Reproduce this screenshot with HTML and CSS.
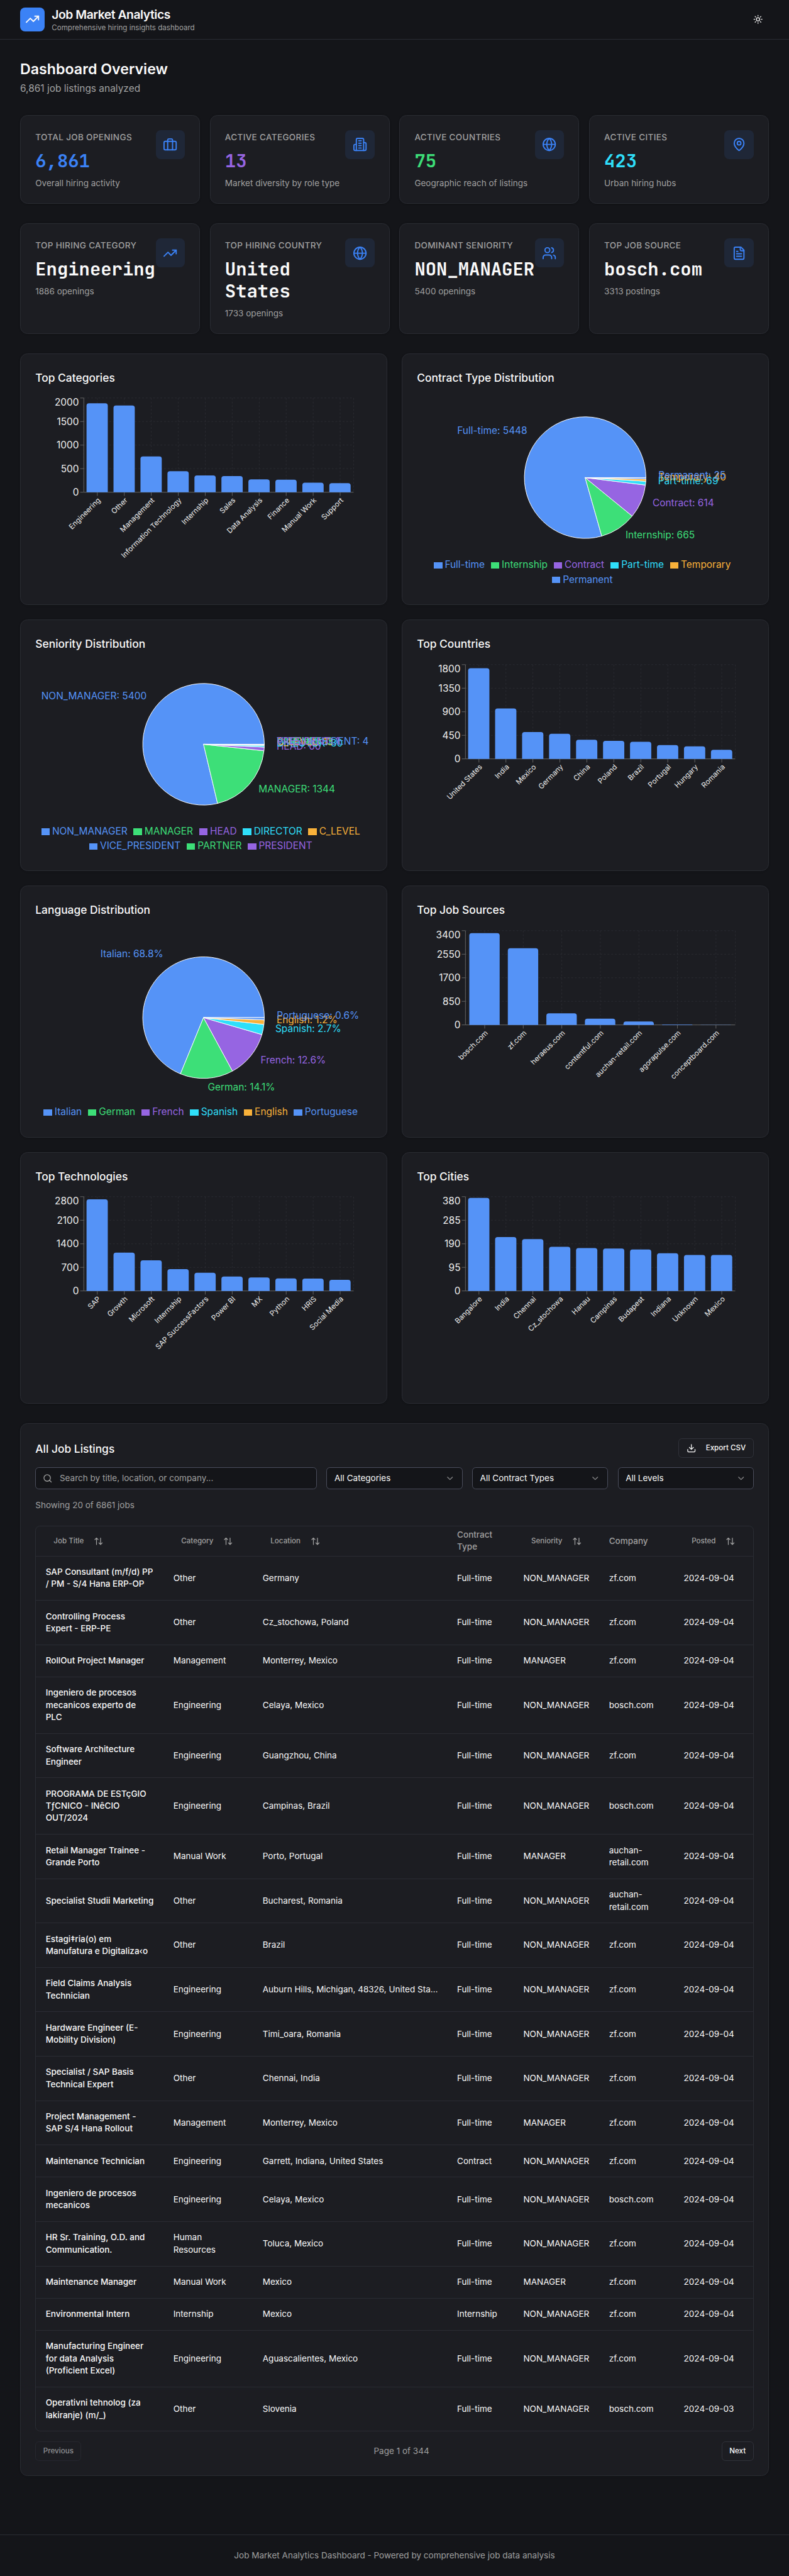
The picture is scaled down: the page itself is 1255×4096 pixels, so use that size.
FILE: index.html
```
<!DOCTYPE html>
<html lang="en">
<head>
<meta charset="utf-8">
<title>Job Market Analytics</title>
<link rel="stylesheet" href="styles.css">
</head>
<body>
<svg class="sprite" aria-hidden="true">
  <symbol id="i-trend" viewBox="0 0 24 24"><path d="M22 7 13.5 15.5 8.5 10.5 2 17"/><path d="M16 7h6v6"/></symbol>
  <symbol id="i-sun" viewBox="0 0 24 24"><circle cx="12" cy="12" r="4"/><path d="M12 2v2M12 20v2M4.93 4.93l1.41 1.41M17.66 17.66l1.41 1.41M2 12h2M20 12h2M6.34 17.66l-1.41 1.41M19.07 4.93l-1.41 1.41"/></symbol>
  <symbol id="i-briefcase" viewBox="0 0 24 24"><rect width="20" height="14" x="2" y="7" rx="2"/><path d="M16 21V5a2 2 0 0 0-2-2h-4a2 2 0 0 0-2 2v16"/></symbol>
  <symbol id="i-building" viewBox="0 0 24 24"><path d="M6 22V4a2 2 0 0 1 2-2h8a2 2 0 0 1 2 2v18Z"/><path d="M6 12H4a2 2 0 0 0-2 2v6a2 2 0 0 0 2 2h2M18 9h2a2 2 0 0 1 2 2v9a2 2 0 0 1-2 2h-2M10 6h4M10 10h4M10 14h4M10 18h4"/></symbol>
  <symbol id="i-globe" viewBox="0 0 24 24"><circle cx="12" cy="12" r="10"/><path d="M12 2a14.5 14.5 0 0 0 0 20 14.5 14.5 0 0 0 0-20M2 12h20"/></symbol>
  <symbol id="i-pin" viewBox="0 0 24 24"><path d="M20 10c0 4.993-5.539 10.193-7.399 11.799a1 1 0 0 1-1.202 0C9.539 20.193 4 14.993 4 10a8 8 0 0 1 16 0"/><circle cx="12" cy="10" r="3"/></symbol>
  <symbol id="i-users" viewBox="0 0 24 24"><path d="M16 21v-2a4 4 0 0 0-4-4H6a4 4 0 0 0-4 4v2"/><circle cx="9" cy="7" r="4"/><path d="M22 21v-2a4 4 0 0 0-3-3.87M16 3.13a4 4 0 0 1 0 7.75"/></symbol>
  <symbol id="i-file" viewBox="0 0 24 24"><path d="M15 2H6a2 2 0 0 0-2 2v16a2 2 0 0 0 2 2h12a2 2 0 0 0 2-2V7Z"/><path d="M14 2v4a2 2 0 0 0 2 2h4M10 9H8M16 13H8M16 17H8"/></symbol>
  <symbol id="i-download" viewBox="0 0 24 24"><path d="M21 15v4a2 2 0 0 1-2 2H5a2 2 0 0 1-2-2v-4M7 10l5 5 5-5M12 15V3"/></symbol>
  <symbol id="i-search" viewBox="0 0 24 24"><circle cx="11" cy="11" r="8"/><path d="m21 21-4.3-4.3"/></symbol>
  <symbol id="i-chevron" viewBox="0 0 24 24"><path d="m6 9 6 6 6-6"/></symbol>
  <symbol id="i-sort" viewBox="0 0 24 24"><path d="m21 16-4 4-4-4M17 20V4M3 8l4-4 4 4M7 4v16"/></symbol>
</svg>

<header class="topbar">
  <div class="topbar-inner">
    <div class="brand">
      <div class="logo"><svg class="icon lg"><use href="#i-trend"/></svg></div>
      <div>
        <h1>Job Market Analytics</h1>
        <p>Comprehensive hiring insights dashboard</p>
      </div>
    </div>
    <button class="theme" aria-label="Toggle theme"><svg class="icon"><use href="#i-sun"/></svg></button>
  </div>
</header>

<main>
  <section class="intro">
    <h2>Dashboard Overview</h2>
    <p>6,861 job listings analyzed</p>
  </section>

  <section class="stats">
    <article class="card stat"><div class="stat-body"><p class="label">TOTAL JOB OPENINGS</p><p class="value blue">6,861</p><p class="sub">Overall hiring activity</p></div><div class="badge"><svg class="icon lg"><use href="#i-briefcase"/></svg></div></article>
    <article class="card stat"><div class="stat-body"><p class="label">ACTIVE CATEGORIES</p><p class="value purple">13</p><p class="sub">Market diversity by role type</p></div><div class="badge"><svg class="icon lg"><use href="#i-building"/></svg></div></article>
    <article class="card stat"><div class="stat-body"><p class="label">ACTIVE COUNTRIES</p><p class="value green">75</p><p class="sub">Geographic reach of listings</p></div><div class="badge"><svg class="icon lg"><use href="#i-globe"/></svg></div></article>
    <article class="card stat"><div class="stat-body"><p class="label">ACTIVE CITIES</p><p class="value cyan">423</p><p class="sub">Urban hiring hubs</p></div><div class="badge"><svg class="icon lg"><use href="#i-pin"/></svg></div></article>
  </section>

  <section class="stats">
    <article class="card stat"><div class="stat-body"><p class="label">TOP HIRING CATEGORY</p><p class="value">Engineering</p><p class="sub">1886 openings</p></div><div class="badge"><svg class="icon lg"><use href="#i-trend"/></svg></div></article>
    <article class="card stat"><div class="stat-body"><p class="label">TOP HIRING COUNTRY</p><p class="value">United States</p><p class="sub">1733 openings</p></div><div class="badge"><svg class="icon lg"><use href="#i-globe"/></svg></div></article>
    <article class="card stat"><div class="stat-body"><p class="label">DOMINANT SENIORITY</p><p class="value">NON_MANAGER</p><p class="sub">5400 openings</p></div><div class="badge"><svg class="icon lg"><use href="#i-users"/></svg></div></article>
    <article class="card stat"><div class="stat-body"><p class="label">TOP JOB SOURCE</p><p class="value">bosch.com</p><p class="sub">3313 postings</p></div><div class="badge"><svg class="icon lg"><use href="#i-file"/></svg></div></article>
  </section>

  <section class="charts">
    <article class="card"><h3>Top Categories</h3><div class="chart" data-bar="categories"></div></article>
    <article class="card"><h3>Contract Type Distribution</h3><div class="chart" data-pie="contract"></div></article>
    <article class="card"><h3>Seniority Distribution</h3><div class="chart" data-pie="seniority"></div></article>
    <article class="card"><h3>Top Countries</h3><div class="chart" data-bar="countries"></div></article>
    <article class="card"><h3>Language Distribution</h3><div class="chart" data-pie="language"></div></article>
    <article class="card"><h3>Top Job Sources</h3><div class="chart" data-bar="sources"></div></article>
    <article class="card"><h3>Top Technologies</h3><div class="chart" data-bar="technologies"></div></article>
    <article class="card"><h3>Top Cities</h3><div class="chart" data-bar="cities"></div></article>
  </section>

  <section class="card listings">
    <div class="listings-head">
      <h3>All Job Listings</h3>
      <button class="btn export"><svg class="icon"><use href="#i-download"/></svg>Export CSV</button>
    </div>
    <div class="filters">
      <div class="field search"><svg class="icon"><use href="#i-search"/></svg><span>Search by title, location, or company...</span></div>
      <div class="field select"><span>All Categories</span><svg class="icon"><use href="#i-chevron"/></svg></div>
      <div class="field select"><span>All Contract Types</span><svg class="icon"><use href="#i-chevron"/></svg></div>
      <div class="field select"><span>All Levels</span><svg class="icon"><use href="#i-chevron"/></svg></div>
    </div>
    <p class="count">Showing 20 of 6861 jobs</p>
    <div class="table-wrap">
      <table>
        <colgroup><col class="c-title"><col class="c-cat"><col class="c-loc"><col class="c-type"><col class="c-sen"><col class="c-comp"><col class="c-date"></colgroup>
        <thead><tr>
          <th><span class="sort">Job Title<svg class="icon"><use href="#i-sort"/></svg></span></th>
          <th><span class="sort">Category<svg class="icon"><use href="#i-sort"/></svg></span></th>
          <th><span class="sort">Location<svg class="icon"><use href="#i-sort"/></svg></span></th>
          <th>Contract Type</th>
          <th><span class="sort">Seniority<svg class="icon"><use href="#i-sort"/></svg></span></th>
          <th>Company</th>
          <th><span class="sort">Posted<svg class="icon"><use href="#i-sort"/></svg></span></th>
        </tr></thead>
        <tbody>
          <tr><td>SAP Consultant (m/f/d) PP<br>/ PM - S/4 Hana ERP-OP</td><td>Other</td><td>Germany</td><td>Full-time</td><td>NON_MANAGER</td><td>zf.com</td><td>2024-09-04</td></tr>
          <tr><td>Controlling Process<br>Expert - ERP-PE</td><td>Other</td><td>Cz_stochowa, Poland</td><td>Full-time</td><td>NON_MANAGER</td><td>zf.com</td><td>2024-09-04</td></tr>
          <tr><td>RollOut Project Manager</td><td>Management</td><td>Monterrey, Mexico</td><td>Full-time</td><td>MANAGER</td><td>zf.com</td><td>2024-09-04</td></tr>
          <tr><td>Ingeniero de procesos<br>mecanicos experto de<br>PLC</td><td>Engineering</td><td>Celaya, Mexico</td><td>Full-time</td><td>NON_MANAGER</td><td>bosch.com</td><td>2024-09-04</td></tr>
          <tr><td>Software Architecture<br>Engineer</td><td>Engineering</td><td>Guangzhou, China</td><td>Full-time</td><td>NON_MANAGER</td><td>zf.com</td><td>2024-09-04</td></tr>
          <tr><td>PROGRAMA DE ESTçGIO<br>TƒCNICO - INêCIO<br>OUT/2024</td><td>Engineering</td><td>Campinas, Brazil</td><td>Full-time</td><td>NON_MANAGER</td><td>bosch.com</td><td>2024-09-04</td></tr>
          <tr><td>Retail Manager Trainee -<br>Grande Porto</td><td>Manual Work</td><td>Porto, Portugal</td><td>Full-time</td><td>MANAGER</td><td>auchan-<br>retail.com</td><td>2024-09-04</td></tr>
          <tr><td>Specialist Studii Marketing</td><td>Other</td><td>Bucharest, Romania</td><td>Full-time</td><td>NON_MANAGER</td><td>auchan-<br>retail.com</td><td>2024-09-04</td></tr>
          <tr><td>Estagi‡ria(o) em<br>Manufatura e Digitaliza‹o</td><td>Other</td><td>Brazil</td><td>Full-time</td><td>NON_MANAGER</td><td>zf.com</td><td>2024-09-04</td></tr>
          <tr><td>Field Claims Analysis<br>Technician</td><td>Engineering</td><td>Auburn Hills, Michigan, 48326, United States</td><td>Full-time</td><td>NON_MANAGER</td><td>zf.com</td><td>2024-09-04</td></tr>
          <tr><td>Hardware Engineer (E-<br>Mobility Division)</td><td>Engineering</td><td>Timi_oara, Romania</td><td>Full-time</td><td>NON_MANAGER</td><td>zf.com</td><td>2024-09-04</td></tr>
          <tr><td>Specialist / SAP Basis<br>Technical Expert</td><td>Other</td><td>Chennai, India</td><td>Full-time</td><td>NON_MANAGER</td><td>zf.com</td><td>2024-09-04</td></tr>
          <tr><td>Project Management -<br>SAP S/4 Hana Rollout</td><td>Management</td><td>Monterrey, Mexico</td><td>Full-time</td><td>MANAGER</td><td>zf.com</td><td>2024-09-04</td></tr>
          <tr><td>Maintenance Technician</td><td>Engineering</td><td>Garrett, Indiana, United States</td><td>Contract</td><td>NON_MANAGER</td><td>zf.com</td><td>2024-09-04</td></tr>
          <tr><td>Ingeniero de procesos<br>mecanicos</td><td>Engineering</td><td>Celaya, Mexico</td><td>Full-time</td><td>NON_MANAGER</td><td>bosch.com</td><td>2024-09-04</td></tr>
          <tr><td>HR Sr. Training, O.D. and<br>Communication.</td><td>Human<br>Resources</td><td>Toluca, Mexico</td><td>Full-time</td><td>NON_MANAGER</td><td>zf.com</td><td>2024-09-04</td></tr>
          <tr><td>Maintenance Manager</td><td>Manual Work</td><td>Mexico</td><td>Full-time</td><td>MANAGER</td><td>zf.com</td><td>2024-09-04</td></tr>
          <tr><td>Environmental Intern</td><td>Internship</td><td>Mexico</td><td>Internship</td><td>NON_MANAGER</td><td>zf.com</td><td>2024-09-04</td></tr>
          <tr><td>Manufacturing Engineer<br>for data Analysis<br>(Proficient Excel)</td><td>Engineering</td><td>Aguascalientes, Mexico</td><td>Full-time</td><td>NON_MANAGER</td><td>zf.com</td><td>2024-09-04</td></tr>
          <tr><td>Operativni tehnolog (za<br>lakiranje) (m/_)</td><td>Other</td><td>Slovenia</td><td>Full-time</td><td>NON_MANAGER</td><td>bosch.com</td><td>2024-09-03</td></tr>
        </tbody>
      </table>
    </div>
    <div class="pager">
      <button class="btn off">Previous</button>
      <span>Page 1 of 344</span>
      <button class="btn">Next</button>
    </div>
  </section>
</main>

<footer>Job Market Analytics Dashboard - Powered by comprehensive job data analysis</footer>
<script src="charts.js"></script>
</body>
</html>
```
FILE: styles.css
```
:root {
  --bg: #141519;
  --card: #1c1d22;
  --line: #2a2c33;
  --input: #4a4d5c;
  --text: #fafafa;
  --muted: #a0a0a0;
  --primary: #3b82f6;
  --c1: #5593f7;
  --c2: #3ddf78;
  --c3: #9665e2;
  --c4: #2fdffa;
  --c5: #f8b13a;
}
* { box-sizing: border-box; margin: 0; padding: 0; }
html { zoom: 0.9666; background: var(--bg); }
body {
  background: var(--bg);
  color: var(--text);
  font: 14px/20px Inter, "Noto Sans", sans-serif;
}
button { font: inherit; color: inherit; background: none; border: 0; }
.sprite { display: none; }
.icon {
  width: 16px; height: 16px; flex: none; display: block;
  fill: none; stroke: currentColor; stroke-width: 2;
  stroke-linecap: round; stroke-linejoin: round;
}
.icon.lg { width: 24px; height: 24px; }

.topbar { border-bottom: 1px solid var(--line); }
.topbar-inner {
  max-width: 1280px; height: 64px; margin: 0 auto; padding: 0 24px;
  display: flex; align-items: center; justify-content: space-between;
}
.brand { display: flex; align-items: center; gap: 12px; }
.logo {
  width: 40px; height: 40px; border-radius: 8px; background: var(--primary);
  display: flex; align-items: center; justify-content: center;
}
h1 { font-size: 20px; line-height: 28px; font-weight: 600; letter-spacing: -0.025em; }
.brand p { font-size: 12px; line-height: 16px; color: var(--muted); }
.theme { width: 36px; height: 36px; display: flex; align-items: center; justify-content: center; }

main { max-width: 1280px; margin: 0 auto; padding: 32px 24px; display: flex; flex-direction: column; gap: 32px; }
.intro { display: flex; flex-direction: column; gap: 4px; }
h2 { font-size: 24px; line-height: 32px; font-weight: 600; padding-top: 1px; margin-bottom: -1px; }
.intro p { font-size: 16px; line-height: 24px; color: var(--muted); }

.card {
  background: var(--card); border: 1px solid var(--line); border-radius: 12px;
  padding: 24px; box-shadow: 0 1px 3px rgba(0, 0, 0, .2);
}
.stats { display: grid; grid-template-columns: repeat(4, minmax(0, 1fr)); gap: 16px; }
.stat { display: flex; align-items: flex-start; justify-content: space-between; padding-bottom: 22px; }
.stat-body { flex: 1; min-width: 0; padding-top: 2px; }
.label { font-weight: 500; letter-spacing: .025em; color: var(--muted); white-space: nowrap; }
.value { margin-top: 11px; font: 700 29.9px/36px "JetBrains Mono", "DejaVu Sans Mono", monospace; }
.sub { margin-top: 9px; color: var(--muted); }
.blue { color: var(--primary); }
.purple { color: var(--c3); }
.green { color: var(--c2); }
.cyan { color: var(--c4); }
.badge { padding: 12px; border-radius: 8px; color: var(--primary); background: rgba(59, 130, 246, .1); }

.charts { display: grid; grid-template-columns: repeat(2, minmax(0, 1fr)); gap: 24px; }
h3 { font-size: 18px; line-height: 28px; font-weight: 500; padding-top: 1px; margin-bottom: -1px; }
.chart { margin-top: 16px; height: 320px; display: flex; flex-direction: column; }
.chart svg.plot { width: 554px; display: block; overflow: visible; font-size: 16px; }
.grid { stroke: #2b2c32; stroke-dasharray: 3 3; fill: none; }
.axis { stroke: #666; fill: none; }
.tick { fill: #ededed; }
.xtick { fill: #ededed; font-size: 12px; }
.bar { fill: var(--c1); }
.slice { stroke: #fff; stroke-width: 1; stroke-linejoin: round; }
.legend { list-style: none; padding: 0 5px; text-align: center; font-size: 16px; line-height: 24px; }
.legend li { display: inline-block; margin-right: 10px; }
.legend .key { display: inline-block; width: 14px; height: 10.5px; margin-right: 4px; vertical-align: middle; }

.listings-head { display: flex; align-items: center; justify-content: space-between; }
.btn {
  height: 32px; padding: 0 12px; border: 1px solid #30323a; border-radius: 6px;
  font-size: 12px; font-weight: 500; display: flex; align-items: center;
}
.btn.off { opacity: .5; }
.export { gap: 16px; }
.filters { margin-top: 16px; display: grid; grid-template-columns: repeat(5, minmax(0, 1fr)); gap: 16px; }
.field {
  height: 36px; padding: 0 12px; border: 1px solid var(--input); border-radius: 6px;
  background: var(--bg); display: flex; align-items: center;
}
.search { grid-column: span 2; gap: 12px; padding-left: 11px; color: var(--muted); }
.select { justify-content: space-between; }
.select .icon { opacity: .5; }
.count { margin-top: 16px; color: var(--muted); }

.table-wrap { margin-top: 24px; border: 1px solid var(--line); border-radius: 8px; }
table { width: 100%; table-layout: fixed; border-collapse: separate; border-spacing: 0; }
.c-title { width: 210px; } .c-cat { width: 147px; } .c-loc { width: 320px; }
.c-type { width: 109px; } .c-sen { width: 141px; } .c-comp { width: 123px; }
th { height: 49px; padding: 0 16px; text-align: left; font-weight: 500; color: var(--muted); border-bottom: 1px solid var(--line); }
.sort { display: flex; align-items: center; gap: 16px; padding-left: 13px; font-size: 12px; white-space: nowrap; }
td { padding: 16px; border-bottom: 1px solid var(--line); vertical-align: middle; white-space: nowrap; }
tr:last-child td { border-bottom: 0; }
td:first-child { font-weight: 500; }
td:nth-child(3) { padding-right: 13.5px; overflow: hidden; text-overflow: ellipsis; }
.pager { margin-top: 16px; display: flex; align-items: center; justify-content: space-between; color: var(--muted); }
.pager .btn { color: var(--text); }

footer {
  margin-top: 64px; padding: 24px; border-top: 1px solid var(--line);
  text-align: center; color: var(--muted);
}
```
FILE: charts.js
```
const bars = {
  categories: { max: 2000, rows: [['Engineering', 1886], ['Other', 1841], ['Management', 761], ['Information Technology', 447], ['Internship', 357], ['Sales', 344], ['Data Analysis', 271], ['Finance', 266], ['Manual Work', 203], ['Support', 193]] },
  countries: { max: 1800, rows: [['United States', 1733], ['India', 964], ['Mexico', 511], ['Germany', 480], ['China', 364], ['Poland', 345], ['Brazil', 325], ['Portugal', 264], ['Hungary', 240], ['Romania', 174]] },
  sources: { max: 3400, rows: [['bosch.com', 3313], ['zf.com', 2766], ['heraeus.com', 418], ['contentful.com', 222], ['auchan-retail.com', 125], ['agorapulse.com', 14], ['conceptboard.com', 3]] },
  technologies: { max: 2800, rows: [['SAP', 2722], ['Growth', 1140], ['Microsoft', 910], ['Internship', 650], ['SAP SuccessFactors', 540], ['Power BI', 430], ['MX', 400], ['Python', 370], ['HRIS', 367], ['Social Media', 330]] },
  cities: { max: 380, rows: [['Bangalore', 375], ['India', 217], ['Chennai', 209], ['Cz_stochowa', 178], ['Hanau', 173], ['Campinas', 171], ['Budapest', 167], ['Indiana', 152], ['Unknown', 145], ['Mexico', 145]] },
};
const pies = {
  contract: { lines: 2, rows: [['Full-time', 5448], ['Internship', 665], ['Contract', 614], ['Part-time', 69], ['Temporary', 40], ['Permanent', 25]] },
  seniority: { lines: 2, rows: [['NON_MANAGER', 5400], ['MANAGER', 1344], ['HEAD', 66], ['DIRECTOR', 30], ['C_LEVEL', 13], ['VICE_PRESIDENT', 4], ['PARTNER', 3], ['PRESIDENT', 1]] },
  language: { lines: 1, unit: '%', rows: [['Italian', 68.8], ['German', 14.1], ['French', 12.6], ['Spanish', 2.7], ['English', 1.2], ['Portuguese', 0.6]] },
};

// Plot area inside the 554x320 chart box
const L = 80, T = 5, W = 444, H = 155, B = T + H;

function barChart({ max, rows }) {
  const band = W / rows.length, w = Math.floor(band * 0.8);
  let grid = '', axis = '', text = '', shapes = '';
  for (let i = 0; i <= 4; i++) {
    const y = B - H * i / 4;
    grid += `<path class="grid" d="M${L} ${y}h${W}"/>`;
    axis += `<path class="axis" d="M${L - 6} ${y}h6"/>`;
    text += `<text class="tick" x="${L - 8}" y="${(i === 4 ? y + 7 : y) + 5.7}" text-anchor="end">${max * i / 4}</text>`;
  }
  grid += `<path class="grid" d="M${L} ${T}v${H}M${L + W} ${T}v${H}"/>`;
  rows.forEach(([name, value], i) => {
    const x = L + band * i + band * 0.1, cx = L + band * (i + 0.5);
    const h = H * value / max, r = Math.min(4, h);
    grid += `<path class="grid" d="M${cx} ${T}v${H}"/>`;
    axis += `<path class="axis" d="M${cx} ${B}v6"/>`;
    shapes += `<path class="bar" d="M${x} ${B}v${r - h}a${r} ${r} 0 0 1 ${r} ${-r}h${w - 2 * r}a${r} ${r} 0 0 1 ${r} ${r}v${h - r}z"/>`;
    text += `<text class="xtick" x="${cx}" y="${B + 8}" dy="0.71em" text-anchor="end" transform="rotate(-45 ${cx} ${B + 8})">${name}</text>`;
  });
  axis += `<path class="axis" d="M${L} ${T}V${B}h${W}"/>`;
  return `<svg class="plot" height="320">${grid}${axis}${shapes}${text}</svg>`;
}

function pieChart({ rows, lines, unit = '' }) {
  const h = 315 - 24 * lines, cx = 277, cy = (h + 5) / 2, R = 100;
  const total = rows.reduce((s, r) => s + r[1], 0);
  const at = (deg, r) => [cx + r * Math.cos(deg * Math.PI / 180), cy - r * Math.sin(deg * Math.PI / 180)];
  let a = 0, slices = '', labels = '', legend = '';
  rows.forEach(([name, value], i) => {
    const color = `var(--c${i % 5 + 1})`, sweep = value / total * 360;
    const [x1, y1] = at(a, R), [x2, y2] = at(a + sweep, R), [lx, ly] = at(a + sweep / 2, R + 20);
    slices += `<path class="slice" fill="${color}" d="M${cx} ${cy}L${x1} ${y1}A${R} ${R} 0 ${sweep > 180 ? 1 : 0} 0 ${x2} ${y2}Z"/>`;
    labels += `<text fill="${color}" x="${lx + 0.5}" y="${ly}" text-anchor="${lx > cx ? 'start' : 'end'}">${name}: ${value}${unit}</text>`;
    legend += `<li style="color:${color}"><span class="key" style="background:${color}"></span>${name}</li>`;
    a += sweep;
  });
  return `<svg class="plot" height="${h}">${slices}${labels}</svg><ul class="legend">${legend}</ul>`;
}

document.querySelectorAll('[data-bar]').forEach(el => { el.innerHTML = barChart(bars[el.dataset.bar]); });
document.querySelectorAll('[data-pie]').forEach(el => { el.innerHTML = pieChart(pies[el.dataset.pie]); });
```
